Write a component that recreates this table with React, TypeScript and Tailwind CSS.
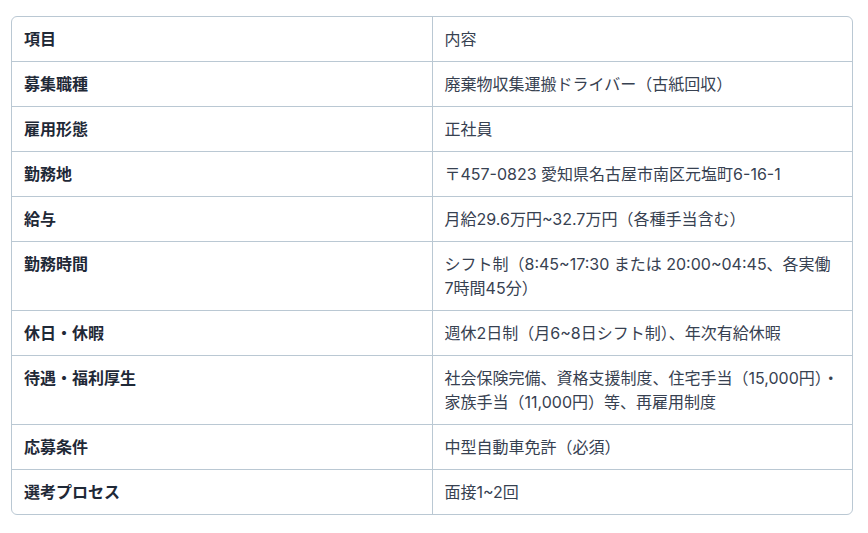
import type { ReactNode } from 'react'

const rows: [string, ReactNode][] = [
  ['募集職種', '廃棄物収集運搬ドライバー（古紙回収）'],
  ['雇用形態', '正社員'],
  ['勤務地', '〒457-0823 愛知県名古屋市南区元塩町6-16-1'],
  ['給与', '月給29.6万円~32.7万円（各種手当含む）'],
  [
    '勤務時間',
    <>
      シフト制（8:45~17:30 または 20:00~04:45、各実働<span className="whitespace-nowrap">7時間</span>45分）
    </>,
  ],
  ['休日・休暇', '週休2日制（月6~8日シフト制）、年次有給休暇'],
  ['待遇・福利厚生', '社会保険完備、資格支援制度、住宅手当（15,000円）・家族手当（11,000円）等、再雇用制度'],
  ['応募条件', '中型自動車免許（必須）'],
  ['選考プロセス', '面接1~2回'],
]

export default function App() {
  return (
    <div
      className="bg-white min-h-[533px] pt-4 px-[11px] text-base leading-6"
      style={{ fontFamily: 'Inter, "Noto Sans CJK JP", sans-serif' }}
    >
      <div className="w-[842px] rounded-md border border-[#bac8d3] overflow-hidden">
        <table className="w-full table-fixed border-collapse">
          <thead>
            <tr>
              <th className="w-1/2 text-left font-bold text-[#1f2937] px-3 py-2.5 border-r border-[#bac8d3]">項目</th>
              <th className="w-1/2 text-left font-normal text-[#374151] px-3 py-2.5">内容</th>
            </tr>
          </thead>
          <tbody>
            {rows.map(([k, v]) => (
              <tr key={k} className="border-t border-[#bac8d3]">
                <td className="align-top font-bold text-[#1f2937] px-3 py-2.5 border-r border-[#bac8d3]">{k}</td>
                <td className="align-top text-[#374151] px-3 py-2.5">{v}</td>
              </tr>
            ))}
          </tbody>
        </table>
      </div>
    </div>
  )
}
